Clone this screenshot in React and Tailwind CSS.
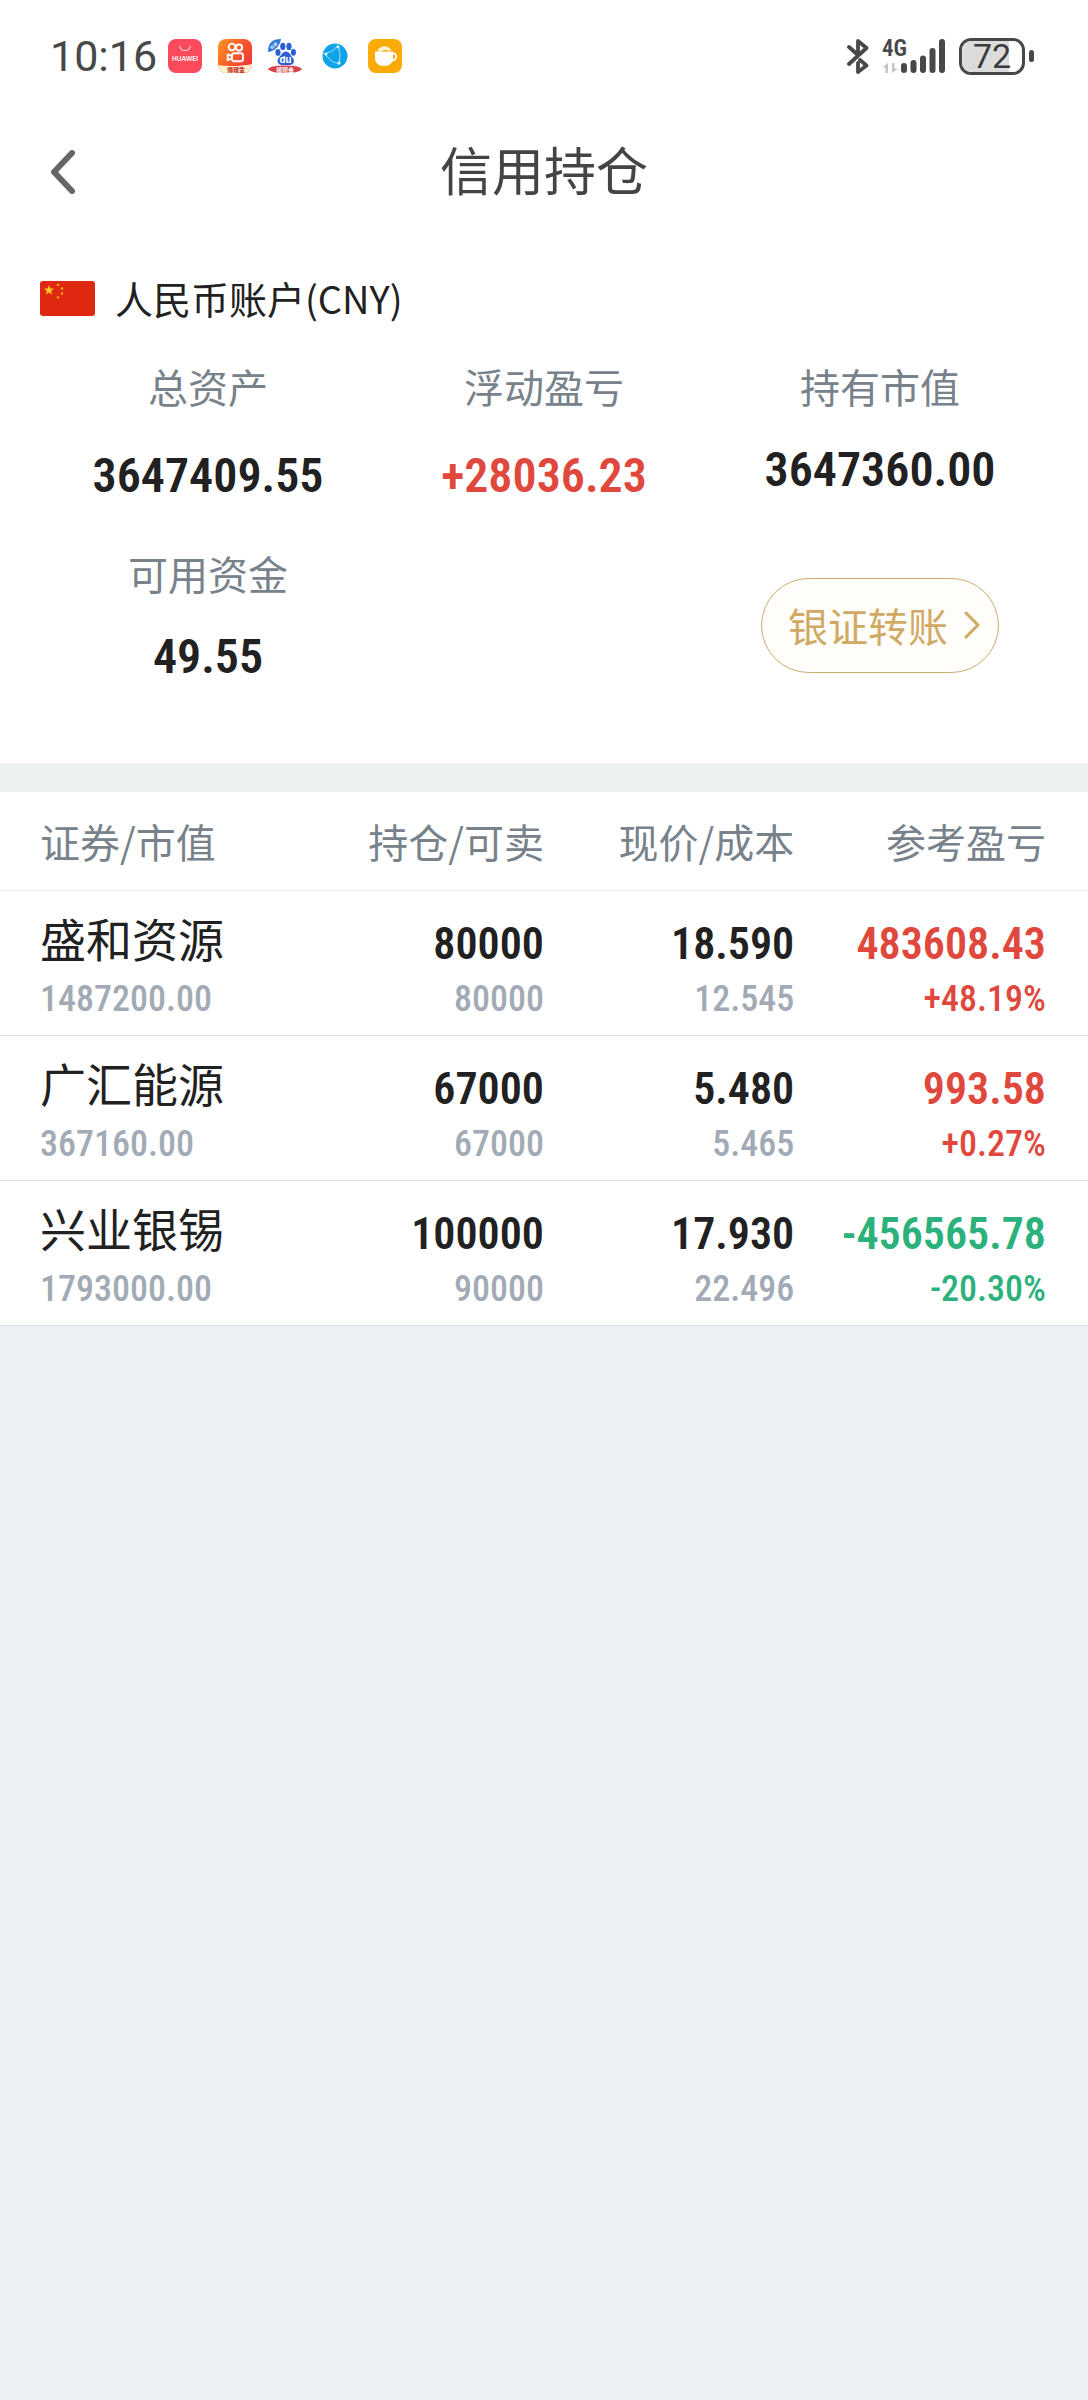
const accounts = [
  { label: '总资产', value: '3647409.55' },
  { label: '浮动盈亏', value: '+28036.23' },
  { label: '持有市值', value: '3647360.00' },
];

const columns = ['证券/市值', '持仓/可卖', '现价/成本', '参考盈亏'];

const holdings = [
  {
    name: '盛和资源',
    marketValue: '1487200.00',
    position: '80000',
    sellable: '80000',
    price: '18.590',
    cost: '12.545',
    profit: '483608.43',
    rate: '+48.19%',
  },
  {
    name: '广汇能源',
    marketValue: '367160.00',
    position: '67000',
    sellable: '67000',
    price: '5.480',
    cost: '5.465',
    profit: '993.58',
    rate: '+0.27%',
  },
  {
    name: '兴业银锡',
    marketValue: '1793000.00',
    position: '100000',
    sellable: '90000',
    price: '17.930',
    cost: '22.496',
    profit: '-456565.78',
    rate: '-20.30%',
  },
];

const numFont = "font-['Roboto_Condensed',Roboto,sans-serif]";

function HuaweiIcon() {
  return (
    <svg className="size-[34px]" viewBox="0 0 34 34" aria-hidden="true">
      <rect width="34" height="34" rx="8" fill="#fb4a5b" />
      <path d="M11.5 7c1 6 10 6 11 0" fill="none" stroke="#ffd5d8" strokeWidth="1.1" strokeLinecap="round" />
      <text x="17" y="22" textAnchor="middle" fontSize="6.5" fontWeight="600" fill="#fff" fontFamily="Inter, sans-serif">HUAWEI</text>
    </svg>
  );
}

function KuaishouIcon() {
  return (
    <svg className="size-[34px]" viewBox="0 0 34 34" aria-hidden="true">
      <defs>
        <linearGradient id="ks" x1="0" y1="0" x2="1" y2="0.6">
          <stop offset="0" stopColor="#fb9a1c" />
          <stop offset="0.5" stopColor="#f9602a" />
          <stop offset="1" stopColor="#ee3a38" />
        </linearGradient>
        <clipPath id="ksClip">
          <rect width="34" height="34" rx="8" />
        </clipPath>
      </defs>
      <g clipPath="url(#ksClip)">
        <rect width="34" height="34" fill="url(#ks)" />
        <g fill="none" stroke="#fff" strokeWidth="1.9">
          <circle cx="14" cy="8" r="3.4" />
          <circle cx="21" cy="8.6" r="3.1" />
          <rect x="14" y="14.2" width="11" height="8" rx="2.2" />
          <path d="M14 17.2l-4.4-1.8v5.8l4.4-1.8" strokeLinejoin="round" />
        </g>
        <path d="M0 26c8 1.6 24 1.6 34-1v9H0z" fill="#fdf0cd" />
        <text x="18" y="32.5" textAnchor="middle" fontSize="6" fontWeight="900" fill="#c8372a" fontFamily="'Noto Sans CJK SC', sans-serif">领现金</text>
      </g>
    </svg>
  );
}

function BaiduIcon() {
  return (
    <svg className="size-[34px]" viewBox="0 0 34 34" aria-hidden="true">
      <path d="M0 13C0 4 4 0 13 0c-1 7-6 12-13 13z" fill="#3178d8" />
      <text x="6" y="8" textAnchor="middle" fontSize="4" fontWeight="700" fill="#d8ecff" fontFamily="'Noto Sans CJK SC', sans-serif" transform="rotate(-42 6 7)">极速</text>
      <g fill="#2c5fd6">
        <ellipse cx="10" cy="13.4" rx="2.6" ry="3.4" />
        <ellipse cx="14.8" cy="7.4" rx="2.6" ry="3.6" />
        <ellipse cx="21" cy="7.4" rx="2.6" ry="3.6" />
        <ellipse cx="25.4" cy="13.4" rx="2.5" ry="3.3" />
        <path d="M18 12.5c3.5 0 4.5 4 6.500 6 3 3 1 7.500-2.500 7.500h-8c-4 0-6-4.500-3-7.500 2.200-2.100 3.500-6 7-6z" />
      </g>
      <text x="17.5" y="23.5" textAnchor="middle" fontSize="9.5" fontWeight="700" fill="#fff" fontFamily="Inter, sans-serif">du</text>
      <path d="M0 30c3-3 9-3.5 17-3.5s14 .5 17 3.5c-3 3.5-9 4-17 4S3 33.5 0 30z" fill="#d8424a" />
      <text x="17" y="32.500" textAnchor="middle" fontSize="6" fontWeight="700" fill="#fff" fontFamily="'Noto Sans CJK SC', sans-serif">领现金</text>
    </svg>
  );
}

function BrowserIcon() {
  return (
    <svg className="size-[34px]" viewBox="0 0 34 34" aria-hidden="true">
      <circle cx="17" cy="17" r="12.5" fill="#10a3ea" />
      <g fill="none" stroke="#a8e6fb" strokeWidth="1">
        <path d="M5.5 14.5c6-.5 11-3 14.5-8.5M20 7c2.500 6 2.500 12 .5 19M7 15c4 5.500 8 9 15 9.500" />
      </g>
      <g fill="#d8f6ff">
        <circle cx="20" cy="8" r="1.4" />
        <circle cx="8" cy="15.2" r="1.4" />
        <circle cx="21" cy="24" r="1.6" />
      </g>
    </svg>
  );
}

function CupIcon() {
  return (
    <svg className="size-[34px]" viewBox="0 0 34 34" aria-hidden="true">
      <rect width="34" height="34" rx="8" fill="#fbab08" />
      <path d="M9.5 12c1-3 4-5 7.5-4.8 3 .2 5 2 6.5 3.8-3 1.8-5-.6-7.5.2-2 .8-4 1.400-6.500.8z" fill="#fff3d6" />
      <path d="M7 12.5h18v6c0 5-3 8.5-9 8.5s-9-3.5-9-8.5z" fill="#fff" />
      <path d="M24.5 14.5c5-1 5 7-1 7" fill="none" stroke="#fff" strokeWidth="1.7" />
    </svg>
  );
}

function SignalIcon() {
  return (
    <svg className="h-9 w-16 overflow-visible" viewBox="0 0 64 36" aria-hidden="true">
      <text x="0" y="18" fontSize="23" fontWeight="600" fill="#484848" className={numFont}>4G</text>
      <g fill="#c4c4c4">
        <path d="M6 25v10H3.500v-5.500H0z" />
        <path d="M10 35V25h2.500v5.500H16z" />
      </g>
      <g stroke="#484848" strokeWidth="6" strokeLinecap="round">
        <path d="M22 28v4M31.5 25v7M41 20.5V32M50.5 13v19M60 4v28" />
      </g>
    </svg>
  );
}

function Battery() {
  return (
    <div className="flex items-center gap-1" role="img" aria-label="72%">
      <div className="relative h-[37px] w-[66px] overflow-hidden rounded-xl border-3 border-[#484848] bg-white">
        <div className="h-full bg-[#dcdcdc]" style={{ width: '78%' }} />
        <span className="absolute inset-0 flex items-center justify-center font-[Roboto,sans-serif] text-[34px] leading-none text-[#3c3c3c]">72</span>
      </div>
      <div className="h-3 w-[5px] rounded-full bg-[#484848]" />
    </div>
  );
}

function StatusBar() {
  return (
    <div className="flex h-28 items-center justify-between pr-[54px] pl-[50px]">
      <div className="flex items-center gap-4">
        <span className="w-[102px] font-[Roboto,sans-serif] text-[43px] leading-none text-[#484848]">10:16</span>
        <HuaweiIcon />
        <KuaishouIcon />
        <BaiduIcon />
        <BrowserIcon />
        <CupIcon />
      </div>
      <div className="flex items-center gap-[13px]">
        <svg className="h-9 w-[22px]" viewBox="0 0 22 36" fill="none" stroke="#484848" strokeWidth="3.8" strokeLinecap="round" strokeLinejoin="round" aria-hidden="true">
          <path d="M2 9l9 8V3l8.500 7L2 26M13 22l6.500 5.500L11 34V25" />
        </svg>
        <SignalIcon />
        <Battery />
      </div>
    </div>
  );
}

function Flag() {
  return (
    <svg className="h-[35px] w-[55px]" viewBox="0 0 55 35" aria-hidden="true">
      <rect width="55" height="35" rx="3" fill="#de2910" />
      <path d="M9 4l1.200 3.600H14l-3 2.300 1.200 3.700L9 11.400l-3.200 2.200L7 9.900 4 7.600h3.800z" fill="#ffce1f" />
      <g fill="#f5a81c">
        <circle cx="18" cy="4" r="1.3" />
        <circle cx="22" cy="7.5" r="1.3" />
        <circle cx="22" cy="12.5" r="1.3" />
        <circle cx="18" cy="16.5" r="1.3" />
      </g>
    </svg>
  );
}

function Stat({ label, value, gap = 'gap-8', color = 'text-[#212121]' }) {
  return (
    <div className={`flex flex-col items-center ${gap}`}>
      <span className="text-[40px] leading-[52px] text-[#77828b]">{label}</span>
      <span className={`${numFont} text-[48px] leading-[52px] font-semibold ${color}`}>{value}</span>
    </div>
  );
}

function Cell({ top, bottom, topColor = 'text-[#212121]', bottomColor = 'text-[#a2abb5]' }) {
  return (
    <td className={`border-b border-[#dcdfe1] pb-[18px] text-right align-bottom last:pr-[42px] ${numFont}`}>
      <span className={`mb-[11px] block text-[44px] leading-[52px] font-semibold ${topColor}`}>{top}</span>
      <span className={`block text-[36px] leading-9 font-medium ${bottomColor}`}>{bottom}</span>
    </td>
  );
}

function HoldingRow({ item }) {
  const color = item.profit.startsWith('-') ? 'text-[#2bb17b]' : 'text-[#e0483e]';
  return (
    <tr className="h-[145px]">
      <th scope="row" className="border-b border-[#dcdfe1] pb-[18px] pl-10 text-left align-bottom font-normal">
        <span className="mb-[18px] block text-[46px] leading-[52px] whitespace-nowrap text-[#212121]">{item.name}</span>
        <span className={`block ${numFont} text-[36px] leading-9 font-medium text-[#a2abb5]`}>{item.marketValue}</span>
      </th>
      <Cell top={item.position} bottom={item.sellable} />
      <Cell top={item.price} bottom={item.cost} />
      <Cell top={item.profit} bottom={item.rate} topColor={color} bottomColor={color} />
    </tr>
  );
}

export default function App() {
  return (
    <div className="min-h-screen bg-[#edf1f4] font-['Noto_Sans_CJK_SC',sans-serif]">
      <div className="bg-white">
        <StatusBar />

        <header className="grid h-30 grid-cols-[1fr_auto_1fr] items-center px-[50px]">
          <button type="button" aria-label="返回" className="justify-self-start">
            <svg className="h-11 w-[26px]" viewBox="0 0 26 44" fill="none" stroke="#666" strokeWidth="6" strokeLinecap="round" strokeLinejoin="round" aria-hidden="true">
              <path d="M22 3L4 22l18 19" />
            </svg>
          </button>
          <h1 className="pb-1.5 text-[52px] leading-none font-normal text-[#444]">信用持仓</h1>
        </header>

        <main>
          <section className="px-10 pt-10 pb-20">
            <div className="flex items-center gap-5">
              <Flag />
              <h2 className="text-[38px] leading-[52px] font-normal text-[#212121]">人民币账户(CNY)</h2>
            </div>

            <div className="mt-9 grid grid-cols-3">
              <Stat {...accounts[0]} gap="gap-[38px]" />
              <Stat {...accounts[1]} gap="gap-[38px]" color="text-[#e0483e]" />
              <Stat {...accounts[2]} />
            </div>

            <div className="mt-[45px] grid grid-cols-3 items-center">
              <Stat label="可用资金" value="49.55" />
              <button type="button" className="col-start-3 mt-5 flex h-[95px] w-[238px] items-center justify-between justify-self-center rounded-full border border-[#cbab6c] bg-[#fffdf9] pr-[18px] pl-[26px] text-[#d0aa64]">
                <span className="text-[40px] leading-[52px]">银证转账</span>
                <svg className="h-7 w-4" viewBox="0 0 16 28" fill="none" stroke="currentColor" strokeWidth="3" strokeLinecap="round" strokeLinejoin="round" aria-hidden="true">
                  <path d="M2 2l12 12L2 26" />
                </svg>
              </button>
            </div>
          </section>

          <div className="h-[29px] bg-[#edf1f2]" />

          <table className="w-full table-fixed border-separate border-spacing-0">
            <colgroup>
              <col className="w-[27%]" />
              <col className="w-[23%]" />
              <col className="w-[23%]" />
              <col className="w-[27%]" />
            </colgroup>
            <thead>
              <tr className="h-[99px]">
                {columns.map((name) => (
                  <th key={name} scope="col" className="border-b border-[#eef0f1] text-right text-[40px] leading-[52px] font-normal whitespace-nowrap text-[#77828b] first:pl-10 first:text-left last:pr-[42px]">
                    {name}
                  </th>
                ))}
              </tr>
            </thead>
            <tbody>
              {holdings.map((item) => (
                <HoldingRow key={item.name} item={item} />
              ))}
            </tbody>
          </table>
        </main>
      </div>
    </div>
  );
}
